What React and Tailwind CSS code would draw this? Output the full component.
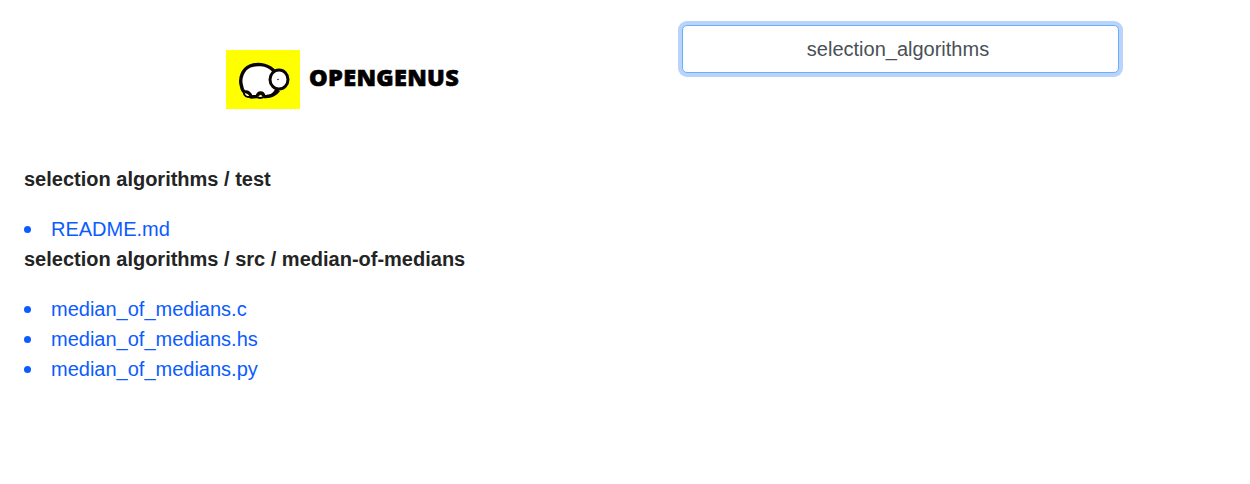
export default function App() {
  const font = "font-['Liberation_Sans',Arial,sans-serif]";
  const Item = ({ children }) => (
    <li className="flex items-center">
      <span className="mt-px mr-[20px] h-[7px] w-[7px] shrink-0 rounded-full bg-[#0b5cff]" />
      <a href="#" className="text-[#0b5cff]">{children}</a>
    </li>
  );
  return (
    <div className={`${font} min-h-[484px] bg-white text-[20px] leading-[30px] text-[#4a4a4a]`}>
      <header className="flex h-[164px] items-start pl-[226px]">
        <div className="mt-[50px] flex w-[456px] items-start">
          <div className="h-[59px] w-[74px] shrink-0 bg-[#ffff00]">
            <svg viewBox="0 0 74 59" className="block h-[59px] w-[74px] blur-[0.3px]" aria-hidden="true">
              <path
                d="M15.500 36C13 28 17 19 24 16C30 13.500 40 13.500 47 20C52 25 54 35 50 41C48 45 44 47 38 46.500C37 42 32.500 41.500 31 46.500L25 47C24.500 43.500 22 41.500 18.500 42C16.500 41 16 39 15.500 36Z"
                fill="#fff"
                stroke="#0a0505"
                strokeWidth="3.400"
                strokeLinejoin="round"
              />
              <ellipse cx="53" cy="29.500" rx="9" ry="9.500" fill="#fff" stroke="#0a0505" strokeWidth="3" />
              <path d="M41 46C45 46.500 50 44.500 53 40.500" fill="none" stroke="#0a0505" strokeWidth="2.400" />
              <path d="M18 42.500C17.500 46 21 47.500 25 47M31 46.500C32 48.500 36 48.500 38 46.500" fill="#fff" stroke="#0a0505" strokeWidth="2" />
              <circle cx="52" cy="29.500" r="0.800" fill="#222" />
            </svg>
          </div>
          <span className="mt-[13px] ml-[9px] font-['Noto_Sans',sans-serif] text-[23.5px] leading-[28px] font-black tracking-[0.3px] text-black [-webkit-text-stroke:0.6px_#000]">
            OPENGENUS
          </span>
        </div>
        <div className="mt-[25px]">
          <input
            readOnly
            value="selection_algorithms"
            className="box-border block h-[48px] w-[437px] rounded-[5px] border border-[#66b0ff] bg-white pr-[5px] text-center text-[20px] text-[#495057] shadow-[0_0_0_4px_#b9d3fb] outline-none"
          />
        </div>
      </header>
      <main className="pl-[24px]">
        <h2 className="font-bold text-[#242424]">selection algorithms / test</h2>
        <ul className="mt-[20px]">
          <Item>README.md</Item>
        </ul>
        <h2 className="font-bold text-[#242424]">selection algorithms / src / median-of-medians</h2>
        <ul className="mt-[20px]">
          <Item>median_of_medians.c</Item>
          <Item>median_of_medians.hs</Item>
          <Item>median_of_medians.py</Item>
        </ul>
      </main>
    </div>
  );
}
